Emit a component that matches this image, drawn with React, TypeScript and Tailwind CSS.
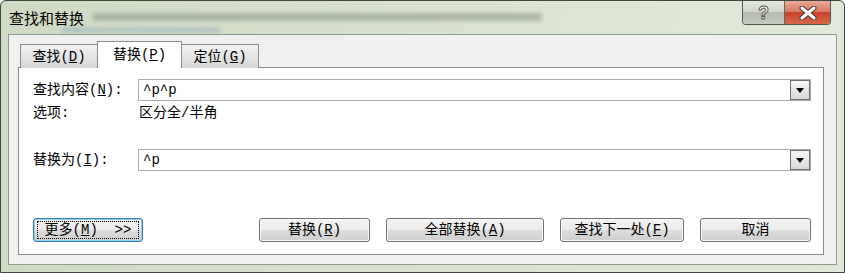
import React from "react";

const font = { fontFamily: '"Liberation Mono", "Noto Sans CJK SC", monospace' };

function Combo({ value }: { value: string }) {
  return (
    <div className="flex h-[22px] flex-1 items-stretch border border-[#a5acb5] bg-white">
      <div className="flex flex-1 items-center pl-[4px] text-[14px] leading-none text-black">
        {value}
      </div>
      <div className="flex w-[20px] items-center justify-center border border-[#707070] bg-gradient-to-b from-[#f6f6f6] to-[#d9d9d9]">
        <svg width="8" height="5" viewBox="0 0 8 5">
          <path d="M0 0 H8 L4 5 Z" fill="#000" />
        </svg>
      </div>
    </div>
  );
}

function Btn({
  children,
  w,
  focus,
}: {
  children: React.ReactNode;
  w: string;
  focus?: boolean;
}) {
  return (
    <div
      className={`${w} flex h-[24px] items-center justify-center rounded-[3px] border ${
        focus
          ? "border-[#3c7fb1] shadow-[inset_0_0_0_1px_#8fd1f3]"
          : "border-[#707070] shadow-[inset_0_0_0_1px_#fbfbfb]"
      } bg-[linear-gradient(to_bottom,#f2f2f2_0%,#ebebeb_50%,#dddddd_50%,#cfcfcf_100%)] text-[14px] leading-none text-black`}
    >
      {focus ? (
        <div className="flex h-[18px] w-[calc(100%-6px)] items-center justify-center border border-dotted border-black">
          {children}
        </div>
      ) : (
        children
      )}
    </div>
  );
}

export default function App() {
  return (
    <div style={font} className="h-[273px] w-[845px] overflow-hidden bg-white">
      <div className="flex h-[273px] w-[845px] flex-col rounded-t-[6px] border border-[#3d4a3d] bg-[linear-gradient(100deg,#cfdac4_0%,#d9e2cf_50%,#e2e9da_100%)]">
        {/* title bar */}
        <div className="relative flex h-[33px] items-start">
          <div className="pl-[8px] pt-[9px] font-['Noto_Sans_CJK_SC',sans-serif] text-[15px] leading-none text-black">
            查找和替换
          </div>
          <div className="ml-[8px] mt-[12px] h-[8px] w-[450px] rounded-full bg-[#8f9a8f] opacity-60 blur-[2px]" />
          <div className="absolute left-[60px] top-[27px] h-[4px] w-[160px] rounded-full bg-[#7f9bb5] opacity-50 blur-[2px]" />
          <div className="ml-auto mr-[13px] flex h-[24px] overflow-hidden rounded-b-[4px] border border-t-0 border-[#4d5a4d]">
            <div className="flex w-[42px] items-center justify-center border-r border-[#5d6a5d] bg-[linear-gradient(to_bottom,#e3e8dc_0%,#cfd6c8_50%,#b3bcae_50%,#c4cbbf_100%)]">
              <span className="font-['Liberation_Sans',sans-serif] text-[18px] font-bold leading-none text-white [-webkit-text-stroke:1px_#5a5a5a]">
                ?
              </span>
            </div>
            <div className="flex w-[45px] items-center justify-center bg-[linear-gradient(to_bottom,#e9a89a_0%,#d8765f_50%,#c7432a_50%,#d8674a_100%)]">
              <svg width="20" height="14" viewBox="0 0 20 14">
                <path d="M4 2 L16 12 M16 2 L4 12" stroke="#4d3a36" strokeWidth="5" strokeLinecap="round" />
                <path d="M4 2 L16 12 M16 2 L4 12" stroke="#fff" strokeWidth="3" strokeLinecap="round" />
              </svg>
            </div>
          </div>
        </div>

        {/* client area */}
        <div className="mx-[7px] flex h-[231px] flex-col border border-[#8e9a8e] bg-[#f0f0f0] pl-[9px] pr-[12px] pt-[7px]">
          {/* tabs */}
          <div className="relative z-10 flex h-[26px] items-end pl-[2px] text-[14px] leading-none text-black">
            <div className="flex h-[24px] w-[78px] items-center justify-center border border-b-0 border-[#898c95] bg-gradient-to-b from-[#f3f3f3] to-[#d6d6d6] pt-[1px]">
              查找(<u>D</u>)
            </div>
            <div className="-ml-[1px] flex h-[27px] w-[85px] items-center justify-center border border-b-0 border-[#898c95] bg-white">
              替换(<u>P</u>)
            </div>
            <div className="-ml-[1px] flex h-[24px] w-[78px] items-center justify-center border border-b-0 border-[#898c95] bg-gradient-to-b from-[#f3f3f3] to-[#d6d6d6] pt-[1px]">
              定位(<u>G</u>)
            </div>
          </div>
          {/* panel */}
          <div className="-mt-[1px] flex h-[188px] flex-col border border-[#898c95] bg-white pl-[14px] pr-[12px] pt-[11px] text-[14px] leading-none text-black">
            <div className="flex items-center">
              <div className="w-[105px]">
                查找内容(<u>N</u>):
              </div>
              <Combo value="^p^p" />
            </div>
            <div className="mt-[4px] flex h-[16px] items-center">
              <div className="w-[106px]">选项:</div>
              <div>区分全/半角</div>
            </div>
            <div className="mt-[28px] flex items-center">
              <div className="w-[105px]">
                替换为(<u>I</u>):
              </div>
              <Combo value="^p" />
            </div>
            <div className="mt-[47px] flex items-center">
              <Btn w="w-[111px]" focus>
                更多(<u>M</u>)&nbsp;&nbsp;&gt;&gt;
              </Btn>
              <div className="ml-[116px]">
                <Btn w="w-[111px]">
                  替换(<u>R</u>)
                </Btn>
              </div>
              <div className="ml-[16px]">
                <Btn w="w-[158px]">
                  全部替换(<u>A</u>)
                </Btn>
              </div>
              <div className="ml-[16px]">
                <Btn w="w-[124px]">
                  查找下一处(<u>F</u>)
                </Btn>
              </div>
              <div className="ml-[16px]">
                <Btn w="w-[111px]">取消</Btn>
              </div>
            </div>
          </div>
        </div>
      </div>
    </div>
  );
}
